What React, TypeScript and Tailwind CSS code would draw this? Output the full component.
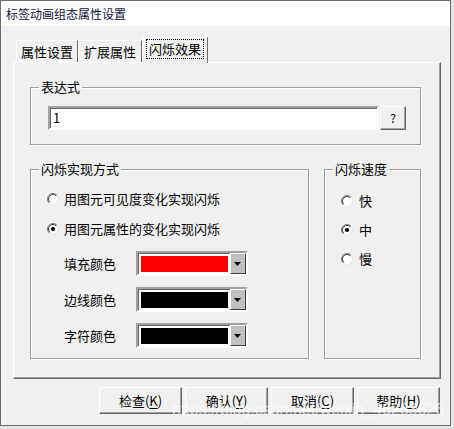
import type { ReactNode } from "react";

const font = "font-['Noto_Sans_CJK_SC','Noto_Sans',sans-serif]";

function Radio({ checked = false }: { checked?: boolean }) {
  return (
    <svg width="12" height="12" viewBox="0 0 12 12" className="shrink-0">
      <circle cx="6" cy="6" r="5.5" fill="#fff" stroke="#e3e3e3" />
      <path d="M2.1 9.9 A5.5 5.5 0 0 1 9.9 2.1" fill="none" stroke="#808080" />
      <path d="M2.8 9.2 A4.5 4.5 0 0 1 9.2 2.8" fill="none" stroke="#404040" />
      {checked && <circle cx="6" cy="6" r="2" fill="#000" />}
    </svg>
  );
}

function Group({ title, className, children }: { title: string; className: string; children: ReactNode }) {
  return (
    <div className={`relative border border-[#a0a0a0] shadow-[inset_1px_1px_0_#fff,1px_1px_0_#fff] ${className}`}>
      <span className="absolute -top-[9px] left-[8px] bg-[#f0f0f0] px-[2px] text-[13px] leading-[16px]">
        {title}
      </span>
      {children}
    </div>
  );
}

function ColorCombo({ color }: { color: string }) {
  return (
    <div className="flex h-[25px] w-[112px] border-2 border-t-[#a0a0a0] border-l-[#a0a0a0] border-b-white border-r-white bg-white shadow-[inset_1px_1px_0_#696969]">
      <div className="flex-1 pl-[3px] pt-[3px] pr-[2px]">
        <div className="h-[16px] w-[87px]" style={{ backgroundColor: color }} />
      </div>
      <div className="flex h-[21px] w-[17px] items-center justify-center border border-t-white border-l-white border-b-[#404040] border-r-[#404040] bg-[#c0c0c0]">
        <svg width="8" height="4" viewBox="0 0 8 4">
          <path d="M0 0 H7 L3.5 4 Z" fill="#000" />
        </svg>
      </div>
    </div>
  );
}

function Button({ label, hotkey }: { label: string; hotkey: string }) {
  return (
    <div className="flex h-[27px] w-[83px] items-center justify-center border border-t-white border-l-white border-b-[#696969] border-r-[#696969] bg-[#f0f0f0] text-[13px] shadow-[inset_-1px_-1px_0_#a0a0a0]">
      {label}(<span className="underline underline-offset-2">{hotkey}</span>)
    </div>
  );
}

export default function App() {
  return (
    <div className={`relative h-[429px] w-[454px] overflow-hidden bg-[#e6e6e6] text-black ${font}`}>
      <div className="flex h-[426px] w-[451px] flex-col border border-[#6d6d6d] bg-[#f0f0f0]">
        {/* Title bar */}
        <div className="flex h-[25px] shrink-0 items-center bg-white pl-[5px] text-[12px] text-[#10103a]">
          标签动画组态属性设置
        </div>

        {/* Tabs */}
        <div className="ml-[12px] mt-[11px] flex h-[25px] items-end pl-[3px]">
          <div className="flex h-[22px] w-[62px] items-center justify-center border border-b-0 border-t-white border-l-white border-r-[#696969] text-[13px]">
            属性设置
          </div>
          <div className="flex h-[22px] w-[64px] items-center justify-center border border-b-0 border-t-white border-l-white border-r-[#696969] text-[13px]">
            扩展属性
          </div>
          <div className="relative z-10 -mb-px flex h-[26px] w-[66px] items-center justify-center border border-b-0 border-t-white border-l-white border-r-[#696969] bg-[#f0f0f0] pb-[3px] text-[13px]">
            <span className="border border-dotted border-black px-[2px] leading-[18px]">闪烁效果</span>
          </div>
        </div>

        {/* Tab panel */}
        <div className="ml-[12px] h-[317px] w-[428px] border border-t-white border-l-white border-b-[#696969] border-r-[#696969] pl-[16px] pt-[24px] shadow-[inset_-1px_-1px_0_#a0a0a0]">
          <Group title="表达式" className="h-[58px] w-[391px] pl-[17px] pt-[18px]">
            <div className="flex">
              <div className="flex h-[24px] w-[331px] items-center border-2 border-t-[#a0a0a0] border-l-[#a0a0a0] border-b-white border-r-white bg-white pl-[3px] text-[13px] shadow-[inset_1px_1px_0_#696969]">
                1
              </div>
              <div className="ml-px flex h-[24px] w-[26px] items-center justify-center border border-t-white border-l-white border-b-[#696969] border-r-[#696969] text-[12px] shadow-[inset_-1px_-1px_0_#a0a0a0]">
                ?
              </div>
            </div>
          </Group>

          <div className="mt-[24px] flex gap-[15px]">
            <Group title="闪烁实现方式" className="h-[190px] w-[279px] pl-[16px] pt-[19px]">
              <div className="flex flex-col gap-[10px] text-[13px]">
                <div className="flex h-[20px] items-center gap-[5px]">
                  <Radio />
                  <span>用图元可见度变化实现闪烁</span>
                </div>
                <div className="flex h-[20px] items-center gap-[5px]">
                  <Radio checked />
                  <span>用图元属性的变化实现闪烁</span>
                </div>
              </div>
              <div className="mt-[12px] flex flex-col gap-[11px] text-[13px]">
                {[
                  ["填充颜色", "#ff0000"],
                  ["边线颜色", "#000000"],
                  ["字符颜色", "#000000"],
                ].map(([label, color]) => (
                  <div key={label} className="flex items-center pl-[17px]">
                    <span className="w-[72px]">{label}</span>
                    <ColorCombo color={color} />
                  </div>
                ))}
              </div>
            </Group>

            <Group title="闪烁速度" className="h-[190px] w-[97px] pl-[16px] pt-[21px]">
              <div className="flex flex-col gap-[9px] text-[13px]">
                {["快", "中", "慢"].map((s) => (
                  <div key={s} className="flex h-[20px] items-center gap-[6px]">
                    <Radio checked={s === "中"} />
                    <span>{s}</span>
                  </div>
                ))}
              </div>
            </Group>
          </div>
        </div>

        {/* Buttons */}
        <div className="ml-[98px] mt-[8px] flex gap-[3px]">
          <Button label="检查" hotkey="K" />
          <Button label="确认" hotkey="Y" />
          <Button label="取消" hotkey="C" />
          <Button label="帮助" hotkey="H" />
        </div>
      </div>

      <span className="pointer-events-none absolute left-[172px] top-[398px] font-['Liberation_Sans',sans-serif] text-[16px] text-white/70">
        https://blog.csdn.net/weixin_46263626
      </span>
    </div>
  );
}
